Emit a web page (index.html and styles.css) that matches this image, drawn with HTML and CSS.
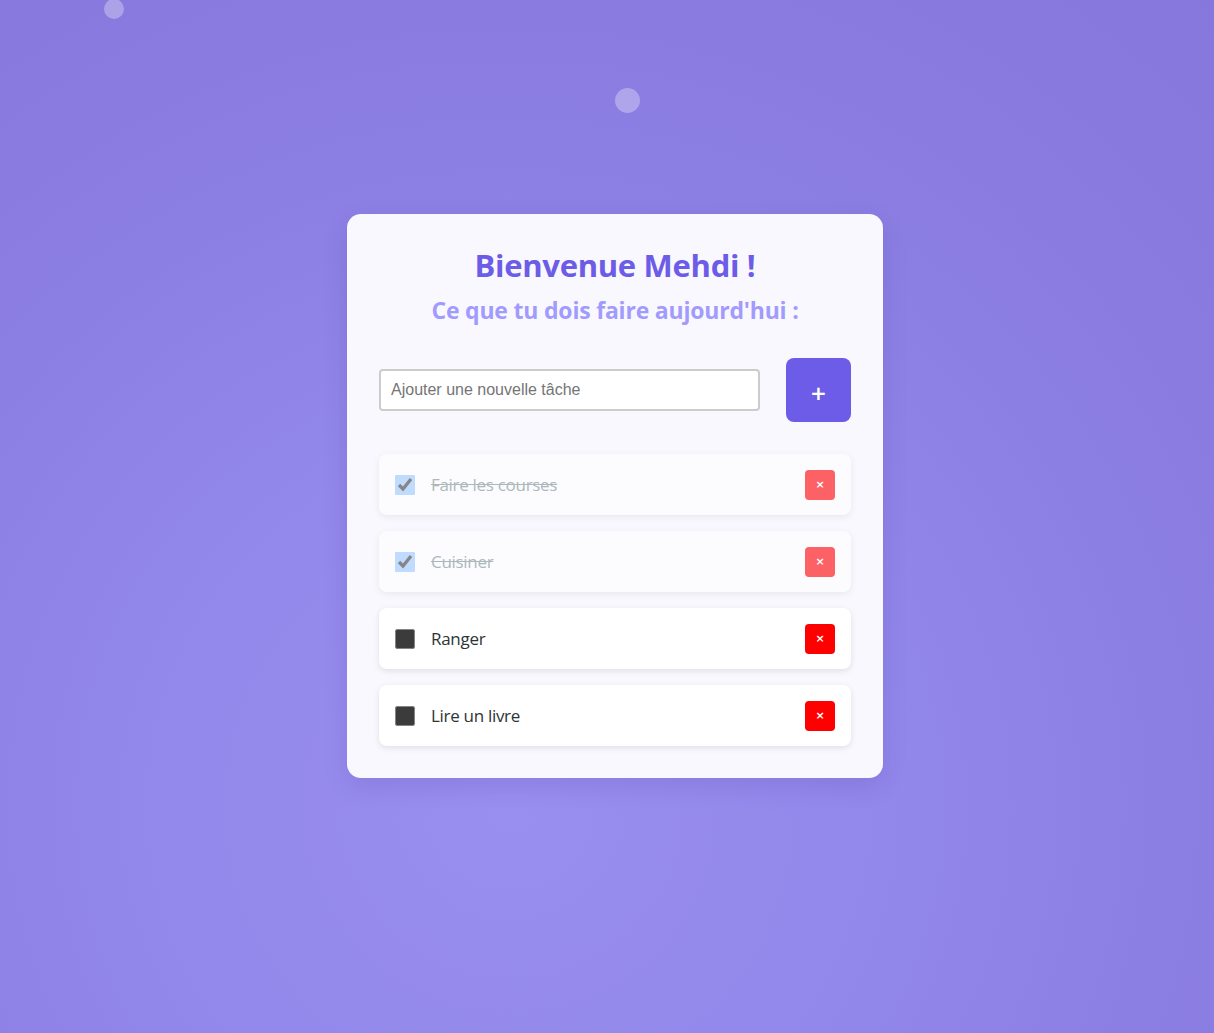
FILE: index.html
```html
<!DOCTYPE html>
<html lang="fr">
<head>
<meta charset="utf-8">
<title>Todo</title>
<link rel="stylesheet" href="styles.css">
</head>
<body>
<div class="bubble bubble-a"></div>
<div class="bubble bubble-b"></div>
<main class="page">
  <section class="card">
    <h1 class="title">Bienvenue Mehdi !</h1>
    <h2 class="subtitle">Ce que tu dois faire aujourd'hui :</h2>
    <form class="add-row">
      <input class="add-input" type="text" placeholder="Ajouter une nouvelle tâche">
      <button class="add-btn" type="button">+</button>
    </form>
    <ul class="tasks">
      <li class="task done">
        <input class="check" type="checkbox" checked>
        <span class="task-text">Faire les courses</span>
        <button class="del" type="button">×</button>
      </li>
      <li class="task done">
        <input class="check" type="checkbox" checked>
        <span class="task-text">Cuisiner</span>
        <button class="del" type="button">×</button>
      </li>
      <li class="task">
        <input class="check" type="checkbox">
        <span class="task-text">Ranger</span>
        <button class="del" type="button">×</button>
      </li>
      <li class="task">
        <input class="check" type="checkbox">
        <span class="task-text">Lire un livre</span>
        <button class="del" type="button">×</button>
      </li>
    </ul>
  </section>
</main>
</body>
</html>
```

FILE: styles.css
```css
* { box-sizing: border-box; }
html, body { height: 100%; }
body {
  margin: 0;
  font-family: "Open Sans", "Noto Sans", sans-serif;
  background: radial-gradient(circle at 42% 78%, #998ff0 0%, #9287ea 35%, #897be0 75%, #8577dc 100%);
  overflow: hidden;
  position: relative;
}
.bubble {
  position: absolute;
  border-radius: 50%;
  background: rgba(255, 255, 255, 0.3);
}
.bubble-a { left: 104px; top: -1px; width: 20px; height: 20px; }
.bubble-b { left: 615px; top: 88px; width: 25px; height: 25px; }
.page {
  display: flex;
  justify-content: center;
  padding-top: 214px;
  padding-left: 16px;
}
.card {
  width: 536px;
  background: #f9f8fe;
  border-radius: 14px;
  padding: 29px 32px 32px;
  box-shadow: 0 8px 24px rgba(60, 40, 150, 0.15);
}
.title {
  margin: 0;
  text-align: center;
  font-size: 31px;
  font-weight: 700;
  color: #6c5ce7;
  line-height: 44px;
  letter-spacing: -0.3px;
}
.subtitle {
  margin: 0;
  text-align: center;
  font-size: 23px;
  font-weight: 700;
  color: #a29bfe;
  line-height: 46px;
  letter-spacing: -0.2px;
}
.add-row {
  display: flex;
  align-items: center;
  gap: 26px;
  margin: 25px 0 32px;
}
.add-input {
  flex: 1;
  height: 42px;
  border: 2px solid #cccccc;
  border-radius: 4px;
  padding: 0 10px;
  font-family: "Liberation Sans", Arial, sans-serif;
  font-size: 16px;
  color: #333;
  background: #fff;
  outline: none;
}
.add-input::placeholder { color: #757575; }
.add-btn {
  width: 65px;
  height: 64px;
  border: none;
  border-radius: 8px;
  background: #6c5ce7;
  color: #fff;
  font-family: "DejaVu Sans", sans-serif;
  font-weight: 700;
  font-size: 20px;
  padding: 5px 0 0;
}
.tasks {
  list-style: none;
  margin: 0;
  padding: 0;
  display: flex;
  flex-direction: column;
  gap: 16px;
}
.task {
  display: flex;
  align-items: center;
  height: 61px;
  padding: 0 16px;
  background: #fff;
  border-radius: 8px;
  box-shadow: 0 2px 6px rgba(0, 0, 0, 0.1);
}
.task.done { opacity: 0.6; }
.check {
  margin: 0;
  width: 20px;
  height: 20px;
  color-scheme: dark;
  flex: none;
}
.task-text {
  flex: 1;
  margin-left: 16px;
  font-size: 17px;
  color: #2d3436;
  letter-spacing: -0.3px;
}
.task.done .task-text {
  color: #7a8f8f;
  text-decoration: line-through;
}
.del {
  width: 30px;
  height: 30px;
  border: none;
  border-radius: 4px;
  background: #ff0000;
  color: #fff;
  font-family: "DejaVu Sans", sans-serif;
  font-weight: 700;
  font-size: 11px;
  padding: 0;
}
```
